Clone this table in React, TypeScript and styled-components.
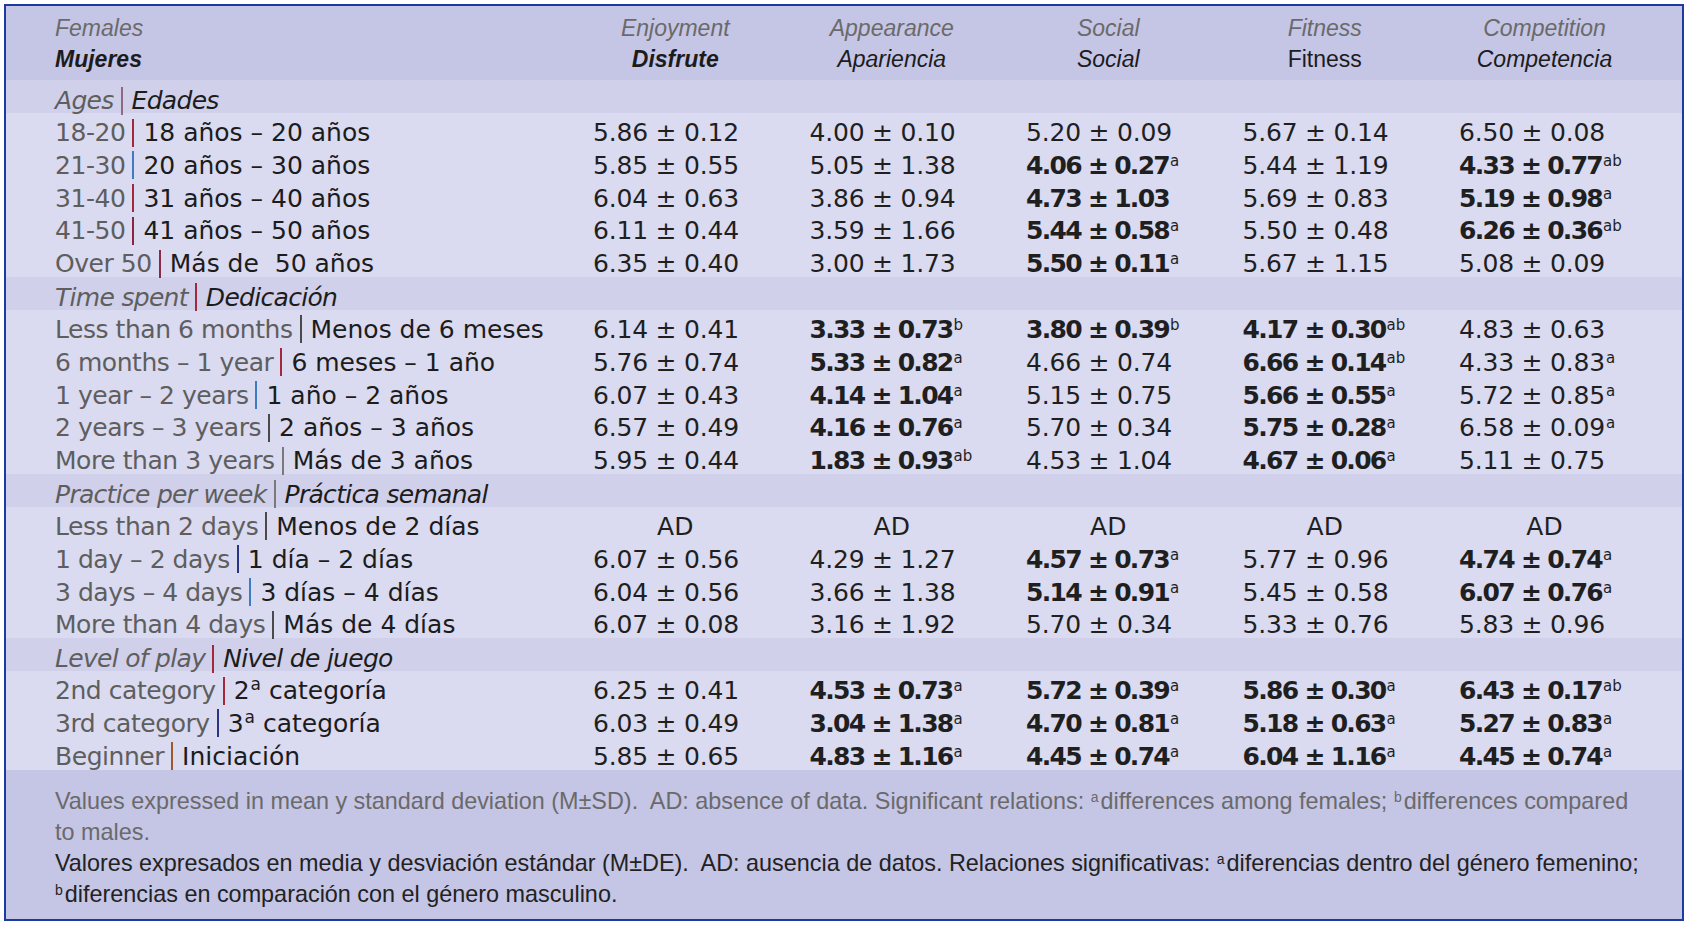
import React from "react";
import styled, { createGlobalStyle } from "styled-components";

const GlobalStyle = createGlobalStyle`
  body {
    margin: 0;
    background: #ffffff;
  }
`;

const COLS = "561px 216.5px 216.5px 216.5px 216.5px 223px 1fr";

const Page = styled.div`
  padding: 4px;
`;

const Frame = styled.div`
  width: 1680px;
  box-sizing: border-box;
  border: 2px solid #1d3b9e;
  background: #c5c5e6;
  font-family: "DejaVu Sans", "Liberation Sans", sans-serif;
`;

const Header = styled.div`
  display: grid;
  grid-template-columns: ${COLS};
  padding: 7px 0 5px;
  background: #c5c5e6;
  font-family: "Liberation Sans", Arial, sans-serif;
  font-size: 23px;
  line-height: 31px;
`;

const HeadCell = styled.div<{ $first?: boolean }>`
  display: flex;
  flex-direction: column;
  align-items: ${(p) => (p.$first ? "flex-start" : "center")};
  padding-left: ${(p) => (p.$first ? "49px" : "0")};
`;

const HeadEn = styled.span`
  color: #6a6a6a;
  font-style: italic;
`;

const HeadEs = styled.span<{ $bold?: boolean; $upright?: boolean }>`
  color: #1c1c1c;
  font-style: ${(p) => (p.$upright ? "normal" : "italic")};
  font-weight: ${(p) => (p.$bold ? 700 : 400)};
`;

const CategoryRow = styled.div`
  box-sizing: border-box;
  height: 33px;
  padding: 8px 0 0 49px;
  display: flex;
  align-items: center;
  background: #d0d0ea;
  font-size: 25px;
  font-style: italic;
  letter-spacing: -0.7px;
`;

const DataRow = styled.div`
  box-sizing: border-box;
  display: grid;
  grid-template-columns: ${COLS};
  height: 32.8px;
  padding-top: 5px;
  align-items: center;
  background: #dadaf0;
  font-size: 25px;
  white-space: nowrap;
`;

const Label = styled.div`
  display: flex;
  align-items: center;
  padding-left: 49px;
`;

const En = styled.span<{ $tight?: boolean }>`
  color: #5e5e5e;
  letter-spacing: ${(p) => (p.$tight ? "-0.45px" : "inherit")};
`;

const Es = styled.span`
  color: #1c1c1c;
  white-space: pre;
`;

const Sep = styled.span<{ $c: string }>`
  display: inline-block;
  width: 2px;
  height: 28px;
  margin: 0 9px 0 7px;
  background: ${(p) => p.$c};
`;

const Value = styled.div<{ $bold?: boolean }>`
  padding-left: 26px;
  color: #1f1f1f;
  font-weight: ${(p) => (p.$bold ? 700 : 400)};
  letter-spacing: ${(p) => (p.$bold ? "-1.7px" : "-0.2px")};
`;

const Missing = styled.div`
  text-align: center;
  color: #1f1f1f;
`;

const Sup = styled.span<{ $size?: number }>`
  font-size: ${(p) => p.$size ?? 15}px;
  font-weight: 400;
  letter-spacing: 0;
  vertical-align: ${(p) => (p.$size ? 9 : 8)}px;
  line-height: 0;
  margin-left: 1px;
`;

const Footer = styled.div`
  padding: 16px 20px 9px 49px;
  background: #c5c5e6;
  font-family: "Liberation Sans", Arial, sans-serif;
  font-size: 23.4px;
  line-height: 31px;
`;

const NoteLine = styled.div<{ $es?: boolean }>`
  white-space: nowrap;
  color: ${(p) => (p.$es ? "#222222" : "#6a6a6a")};
`;

const NoteSup = styled.span`
  font-size: 14px;
  vertical-align: 7px;
  line-height: 0;
  margin-right: 2px;
`;

type Cell = { v: string; b?: boolean; s?: string } | "AD";

type Row =
  | { kind: "cat"; en: string; es: string; sep: string }
  | { kind: "data"; en: string; es: React.ReactNode; sep: string; cells: Cell[] };

const r = (v: string, s?: string): Cell => ({ v, s });
const b = (v: string, s?: string): Cell => ({ v, b: true, s });

const RED = "#a3283d";
const BLUE = "#3b7cc2";
const NAVY = "#2b3582";
const DARK = "#4a4a4a";
const GREY = "#7a7a7a";

const rows: Row[] = [
  { kind: "cat", en: "Ages", es: "Edades", sep: "#8d6a80" },
  {
    kind: "data", en: "18-20", es: "18 años – 20 años", sep: RED,
    cells: [r("5.86 ± 0.12"), r("4.00 ± 0.10"), r("5.20 ± 0.09"), r("5.67 ± 0.14"), r("6.50 ± 0.08")],
  },
  {
    kind: "data", en: "21-30", es: "20 años – 30 años", sep: BLUE,
    cells: [r("5.85 ± 0.55"), r("5.05 ± 1.38"), b("4.06 ± 0.27", "a"), r("5.44 ± 1.19"), b("4.33 ± 0.77", "ab")],
  },
  {
    kind: "data", en: "31-40", es: "31 años – 40 años", sep: RED,
    cells: [r("6.04 ± 0.63"), r("3.86 ± 0.94"), b("4.73 ± 1.03"), r("5.69 ± 0.83"), b("5.19 ± 0.98", "a")],
  },
  {
    kind: "data", en: "41-50", es: "41 años – 50 años", sep: "#8a2444",
    cells: [r("6.11 ± 0.44"), r("3.59 ± 1.66"), b("5.44 ± 0.58", "a"), r("5.50 ± 0.48"), b("6.26 ± 0.36", "ab")],
  },
  {
    kind: "data", en: "Over 50", es: "Más de  50 años", sep: "#8a2a4a",
    cells: [r("6.35 ± 0.40"), r("3.00 ± 1.73"), b("5.50 ± 0.11", "a"), r("5.67 ± 1.15"), r("5.08 ± 0.09")],
  },
  { kind: "cat", en: "Time spent", es: "Dedicación", sep: RED },
  {
    kind: "data", en: "Less than 6 months", es: "Menos de 6 meses", sep: DARK,
    cells: [r("6.14 ± 0.41"), b("3.33 ± 0.73", "b"), b("3.80 ± 0.39", "b"), b("4.17 ± 0.30", "ab"), r("4.83 ± 0.63")],
  },
  {
    kind: "data", en: "6 months – 1 year", es: "6 meses – 1 año", sep: RED,
    cells: [r("5.76 ± 0.74"), b("5.33 ± 0.82", "a"), r("4.66 ± 0.74"), b("6.66 ± 0.14", "ab"), r("4.33 ± 0.83", "a")],
  },
  {
    kind: "data", en: "1 year – 2 years", es: "1 año – 2 años", sep: BLUE,
    cells: [r("6.07 ± 0.43"), b("4.14 ± 1.04", "a"), r("5.15 ± 0.75"), b("5.66 ± 0.55", "a"), r("5.72 ± 0.85", "a")],
  },
  {
    kind: "data", en: "2 years – 3 years", es: "2 años – 3 años", sep: DARK,
    cells: [r("6.57 ± 0.49"), b("4.16 ± 0.76", "a"), r("5.70 ± 0.34"), b("5.75 ± 0.28", "a"), r("6.58 ± 0.09", "a")],
  },
  {
    kind: "data", en: "More than 3 years", es: "Más de 3 años", sep: GREY,
    cells: [r("5.95 ± 0.44"), b("1.83 ± 0.93", "ab"), r("4.53 ± 1.04"), b("4.67 ± 0.06", "a"), r("5.11 ± 0.75")],
  },
  { kind: "cat", en: "Practice per week", es: "Práctica semanal", sep: GREY },
  {
    kind: "data", en: "Less than 2 days", es: "Menos de 2 días", sep: DARK,
    cells: ["AD", "AD", "AD", "AD", "AD"],
  },
  {
    kind: "data", en: "1 day – 2 days", es: "1 día – 2 días", sep: NAVY,
    cells: [r("6.07 ± 0.56"), r("4.29 ± 1.27"), b("4.57 ± 0.73", "a"), r("5.77 ± 0.96"), b("4.74 ± 0.74", "a")],
  },
  {
    kind: "data", en: "3 days – 4 days", es: "3 días – 4 días", sep: BLUE,
    cells: [r("6.04 ± 0.56"), r("3.66 ± 1.38"), b("5.14 ± 0.91", "a"), r("5.45 ± 0.58"), b("6.07 ± 0.76", "a")],
  },
  {
    kind: "data", en: "More than 4 days", es: "Más de 4 días", sep: DARK,
    cells: [r("6.07 ± 0.08"), r("3.16 ± 1.92"), r("5.70 ± 0.34"), r("5.33 ± 0.76"), r("5.83 ± 0.96")],
  },
  { kind: "cat", en: "Level of play", es: "Nivel de juego", sep: RED },
  {
    kind: "data", en: "2nd category", es: <>2<Sup $size={17}>a</Sup> categoría</>, sep: RED,
    cells: [r("6.25 ± 0.41"), b("4.53 ± 0.73", "a"), b("5.72 ± 0.39", "a"), b("5.86 ± 0.30", "a"), b("6.43 ± 0.17", "ab")],
  },
  {
    kind: "data", en: "3rd category", es: <>3<Sup $size={17}>a</Sup> categoría</>, sep: NAVY,
    cells: [r("6.03 ± 0.49"), b("3.04 ± 1.38", "a"), b("4.70 ± 0.81", "a"), b("5.18 ± 0.63", "a"), b("5.27 ± 0.83", "a")],
  },
  {
    kind: "data", en: "Beginner", es: "Iniciación", sep: "#9a5a2c",
    cells: [r("5.85 ± 0.65"), b("4.83 ± 1.16", "a"), b("4.45 ± 0.74", "a"), b("6.04 ± 1.16", "a"), b("4.45 ± 0.74", "a")],
  },
];

const heads: { en: string; es: string; bold?: boolean; upright?: boolean }[] = [
  { en: "Enjoyment", es: "Disfrute", bold: true },
  { en: "Appearance", es: "Apariencia" },
  { en: "Social", es: "Social" },
  { en: "Fitness", es: "Fitness", upright: true },
  { en: "Competition", es: "Competencia" },
];

const ValueCell = ({ cell }: { cell: Cell }) => {
  if (cell === "AD") return <Missing>AD</Missing>;
  return (
    <Value $bold={cell.b}>
      {cell.v}
      {cell.s && <Sup>{cell.s}</Sup>}
    </Value>
  );
};

const App = () => {
  return (
    <Page>
      <GlobalStyle />
      <Frame>
        <Header>
          <HeadCell $first>
            <HeadEn>Females</HeadEn>
            <HeadEs $bold>Mujeres</HeadEs>
          </HeadCell>
          {heads.map((h) => (
            <HeadCell key={h.en}>
              <HeadEn>{h.en}</HeadEn>
              <HeadEs $bold={h.bold} $upright={h.upright}>
                {h.es}
              </HeadEs>
            </HeadCell>
          ))}
        </Header>

        {rows.map((row, i) =>
          row.kind === "cat" ? (
            <CategoryRow key={i}>
              <En>{row.en}</En>
              <Sep $c={row.sep} />
              <Es>{row.es}</Es>
            </CategoryRow>
          ) : (
            <DataRow key={i}>
              <Label>
                <En $tight>{row.en}</En>
                <Sep $c={row.sep} />
                <Es>{row.es}</Es>
              </Label>
              {row.cells.map((c, j) => (
                <ValueCell key={j} cell={c} />
              ))}
            </DataRow>
          )
        )}

        <Footer>
          <NoteLine>
            Values expressed in mean y standard deviation (M±SD).&nbsp; AD: absence of data. Significant relations:{" "}
            <NoteSup>a</NoteSup>differences among females; <NoteSup>b</NoteSup>differences compared
          </NoteLine>
          <NoteLine>to males.</NoteLine>
          <NoteLine $es>
            Valores expresados en media y desviación estándar (M±DE).&nbsp; AD: ausencia de datos. Relaciones
            significativas: <NoteSup>a</NoteSup>diferencias dentro del género femenino;
          </NoteLine>
          <NoteLine $es>
            <NoteSup>b</NoteSup>diferencias en comparación con el género masculino.
          </NoteLine>
        </Footer>
      </Frame>
    </Page>
  );
};

export default App;
